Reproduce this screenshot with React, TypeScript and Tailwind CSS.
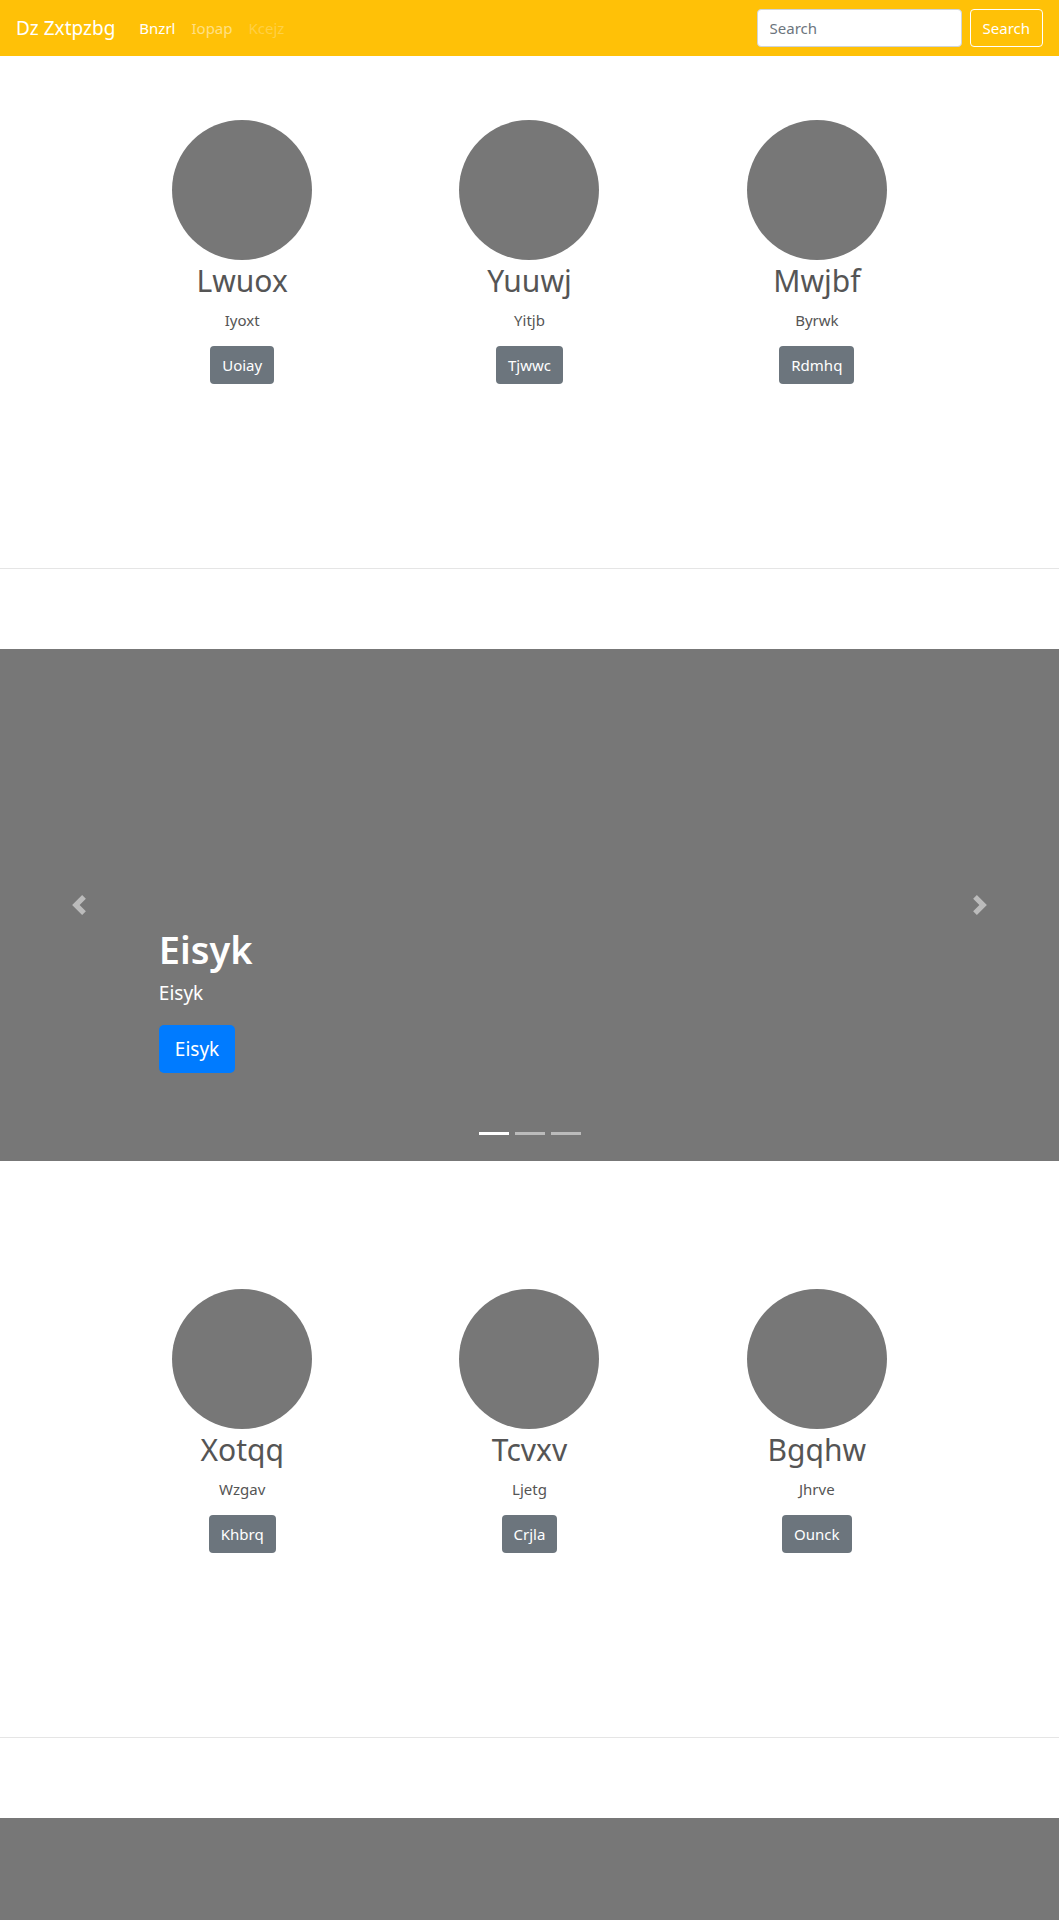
import { useState } from "react";

type Member = {
    name: string;
    role: string;
    action: string;
};

const topRow: Member[] = [
    { name: "Lwuox", role: "Iyoxt", action: "Uoiay" },
    { name: "Yuuwj", role: "Yitjb", action: "Tjwwc" },
    { name: "Mwjbf", role: "Byrwk", action: "Rdmhq" },
];

const bottomRow: Member[] = [
    { name: "Xotqq", role: "Wzgav", action: "Khbrq" },
    { name: "Tcvxv", role: "Ljetg", action: "Crjla" },
    { name: "Bgqhw", role: "Jhrve", action: "Ounck" },
];

function Navbar() {
    const [query, setQuery] = useState("");

    return (
        <nav className="flex h-14 items-center bg-[#ffc107] px-4">
            <a href="#" className="mr-4 text-[19px] leading-[30px] text-white">
                Dz Zxtpzbg
            </a>

            <ul className="flex items-center text-[15px]">
                <li>
                    <a href="#" className="block px-2 py-2 text-white">
                        Bnzrl
                    </a>
                </li>
                <li>
                    <a href="#" className="block px-2 py-2 text-white/50">
                        Iopap
                    </a>
                </li>
                <li>
                    <span className="block px-2 py-2 text-white/25">
                        Kcejz
                    </span>
                </li>
            </ul>

            <form
                className="ml-auto flex items-center"
                onSubmit={(e) => e.preventDefault()}
            >
                <input
                    value={query}
                    onChange={(e) => setQuery(e.target.value)}
                    placeholder="Search"
                    className="
                        h-[38px]
                        w-[205px]
                        rounded
                        border
                        border-[#ced4da]
                        bg-white
                        px-3
                        text-[15px]
                        text-[#495057]
                        outline-none
                        placeholder:text-[#6c757d]
                    "
                />
                <button
                    type="submit"
                    className="
                        ml-2
                        h-[38px]
                        rounded
                        border
                        border-white
                        px-3
                        text-[15px]
                        text-white
                    "
                >
                    Search
                </button>
            </form>
        </nav>
    );
}

function MemberGrid({ members }: { members: Member[] }) {
    return (
        <div className="mx-auto grid w-[862px] grid-cols-3">
            {members.map((m) => (
                <div key={m.name} className="flex flex-col items-center">
                    <div className="h-[140px] w-[140px] rounded-full bg-[#777777]" />

                    <h2 className="mt-[2px] text-[30px] leading-[38px] text-[#555555]">
                        {m.name}
                    </h2>

                    <p className="mt-[8px] text-[15px] leading-[24px] text-[#555555]">
                        {m.role}
                    </p>

                    <button
                        className="
                            mt-[14px]
                            h-[38px]
                            rounded
                            bg-[#6c757d]
                            px-3
                            text-[15px]
                            text-white
                        "
                    >
                        {m.action}
                    </button>
                </div>
            ))}
        </div>
    );
}

function Chevron({ dir }: { dir: "prev" | "next" }) {
    return (
        <svg
            width="20"
            height="20"
            viewBox="0 0 8 8"
            className="opacity-50"
            fill="#ffffff"
        >
            <path
                d={
                    dir === "prev"
                        ? "M5.25 0l-4 4 4 4 1.5-1.5-2.5-2.5 2.5-2.5-1.5-1.5z"
                        : "M2.75 0l-1.5 1.5 2.5 2.5-2.5 2.5 1.5 1.5 4-4-4-4z"
                }
            />
        </svg>
    );
}

function Carousel({ title }: { title: string }) {
    const [active, setActive] = useState(0);

    return (
        <div className="relative h-[512px] bg-[#777777]">
            <button
                className="absolute inset-y-0 left-0 flex w-[15%] items-center justify-center"
                onClick={() => setActive((active + 2) % 3)}
            >
                <Chevron dir="prev" />
            </button>

            <button
                className="absolute inset-y-0 right-0 flex w-[15%] items-center justify-center"
                onClick={() => setActive((active + 1) % 3)}
            >
                <Chevron dir="next" />
            </button>

            <div className="absolute bottom-[88px] left-[15%] right-[15%] text-white">
                <h1 className="text-[38px] font-semibold leading-[48px]">
                    {title}
                </h1>
                <p className="mt-[5px] text-[19px] leading-[30px]">
                    {title}
                </p>
                <button
                    className="
                        mt-[17px]
                        h-[48px]
                        rounded-[5px]
                        bg-[#007bff]
                        px-4
                        text-[19px]
                        text-white
                    "
                >
                    {title}
                </button>
            </div>

            <ol className="absolute bottom-[26px] left-0 right-0 flex justify-center gap-[6px]">
                {[0, 1, 2].map((i) => (
                    <li
                        key={i}
                        onClick={() => setActive(i)}
                        className={
                            i === active
                                ? "h-[3px] w-[30px] bg-white"
                                : "h-[3px] w-[30px] bg-white/50"
                        }
                    />
                ))}
            </ol>
        </div>
    );
}

export default function App() {
    return (
        <div className="min-h-screen bg-white font-['Noto_Sans',sans-serif]">
            <Navbar />

            <main>
                <section className="pt-16">
                    <MemberGrid members={topRow} />
                </section>

                <hr className="mt-[184px] border-t border-[#e5e5e5]" />

                <div className="mt-20">
                    <Carousel title="Eisyk" />
                </div>

                <section className="pt-32">
                    <MemberGrid members={bottomRow} />
                </section>

                <hr className="mt-[184px] border-t border-[#e5e5e5]" />

                <div className="mt-20">
                    <Carousel title="Eisyk" />
                </div>
            </main>
        </div>
    );
}
